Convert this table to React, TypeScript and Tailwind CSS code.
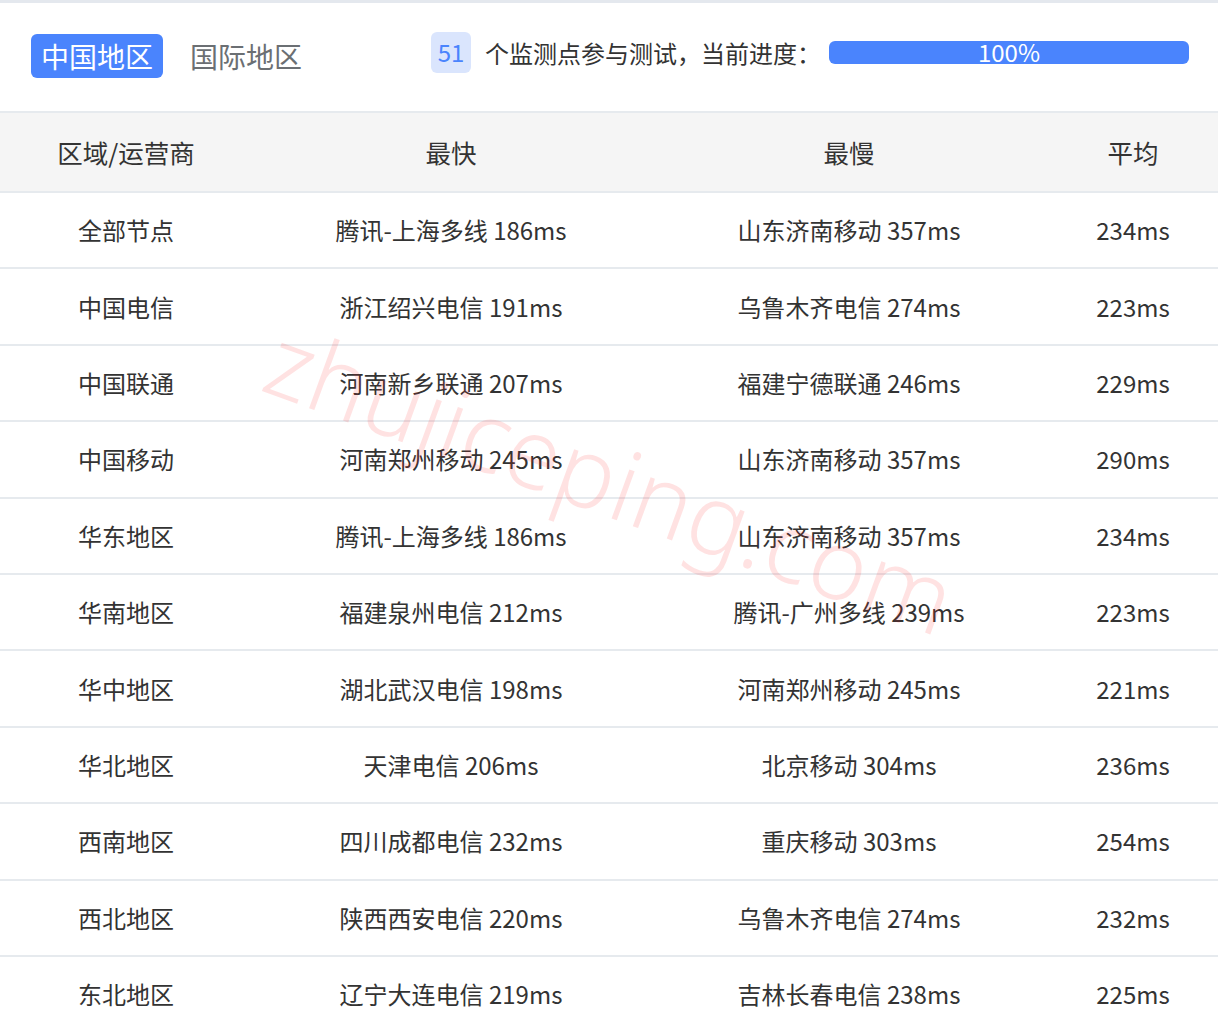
import React from "react";

const rows: [string, string, string, string][] = [
  ["全部节点", "腾讯-上海多线 186ms", "山东济南移动 357ms", "234ms"],
  ["中国电信", "浙江绍兴电信 191ms", "乌鲁木齐电信 274ms", "223ms"],
  ["中国联通", "河南新乡联通 207ms", "福建宁德联通 246ms", "229ms"],
  ["中国移动", "河南郑州移动 245ms", "山东济南移动 357ms", "290ms"],
  ["华东地区", "腾讯-上海多线 186ms", "山东济南移动 357ms", "234ms"],
  ["华南地区", "福建泉州电信 212ms", "腾讯-广州多线 239ms", "223ms"],
  ["华中地区", "湖北武汉电信 198ms", "河南郑州移动 245ms", "221ms"],
  ["华北地区", "天津电信 206ms", "北京移动 304ms", "236ms"],
  ["西南地区", "四川成都电信 232ms", "重庆移动 303ms", "254ms"],
  ["西北地区", "陕西西安电信 220ms", "乌鲁木齐电信 274ms", "232ms"],
  ["东北地区", "辽宁大连电信 219ms", "吉林长春电信 238ms", "225ms"],
];

export default function App() {
  return (
    <div
      className="relative w-[1218px] h-[1031px] overflow-hidden bg-white text-[#333]"
      style={{ fontFamily: '"Noto Sans CJK SC", "Noto Sans", sans-serif' }}
    >
      <div className="h-[3px] bg-[#e4e8ee]" />
      <div className="h-[110px] flex items-center border-b-2 border-[#e6eaee]">
        <div className="ml-[31px] flex items-center h-[44px] px-[10px] rounded-[6px] bg-[#4a84fd] text-white text-[28px] leading-none -mt-[2px]">
          中国地区
        </div>
        <div className="ml-[27px] text-[28px] leading-none text-[#6b6f73] -mt-[2px]">国际地区</div>
        <div className="ml-[129px] flex items-center h-[41px] w-[40px] justify-center rounded-[6px] bg-[#dae5fd] text-[#4a84fd] text-[24px] leading-none -mt-[10px]">
          51
        </div>
        <div className="ml-[14px] text-[24px] leading-none -mt-[8px] text-[#333]">
          个监测点参与测试，当前进度：
        </div>
        <div className="ml-[8px] w-[360px] h-[23px] rounded-[6px] bg-[#4a84fd] flex items-center justify-center text-white text-[24px] leading-none -mt-[10px]">
          100%
        </div>
      </div>
      <div className="grid grid-cols-[252px_398px_398px_1fr] h-[80px] items-center bg-[#f5f5f5] border-b-2 border-[#e6eaee] text-[25.5px] text-center text-[#333]">
        <div>区域/运营商</div>
        <div>最快</div>
        <div>最慢</div>
        <div>平均</div>
      </div>
      {rows.map((r, i) => (
        <div
          key={i}
          className="grid grid-cols-[252px_398px_398px_1fr] h-[76.4px] items-center border-b-2 border-[#e6eaee] text-[24px] text-center text-[#333]"
        >
          <div>{r[0]}</div>
          <div>{r[1]}</div>
          <div>{r[2]}</div>
          <div>{r[3]}</div>
        </div>
      ))}
      <div
        className="absolute left-[288px] top-[308px] text-[98px] font-light leading-none text-[rgba(255,30,30,0.13)] pointer-events-none origin-top-left rotate-[20deg] whitespace-nowrap"
        style={{ fontFamily: '"Noto Sans", sans-serif' }}
      >
        zhujiceping.com
      </div>
    </div>
  );
}
